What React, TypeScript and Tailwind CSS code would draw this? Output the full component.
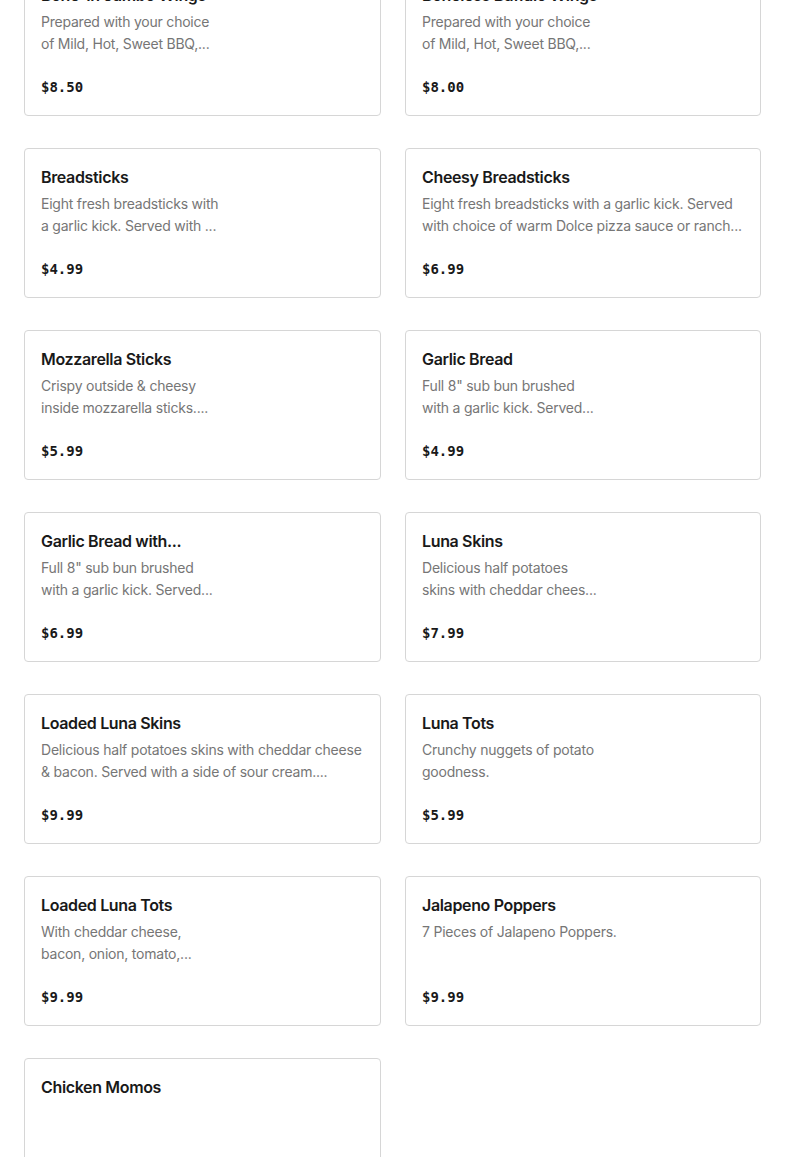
interface MenuItem {
  title: string;
  lines: string[];
  price?: string;
}

const ITEMS: MenuItem[] = [
  { title: 'Bone-In Jumbo Wings', lines: ['Prepared with your choice', 'of Mild, Hot, Sweet BBQ,...'], price: '$8.50' },
  { title: 'Boneless Buffalo Wings', lines: ['Prepared with your choice', 'of Mild, Hot, Sweet BBQ,...'], price: '$8.00' },
  { title: 'Breadsticks', lines: ['Eight fresh breadsticks with', 'a garlic kick. Served with ...'], price: '$4.99' },
  {
    title: 'Cheesy Breadsticks',
    lines: ['Eight fresh breadsticks with a garlic kick. Served', 'with choice of warm Dolce pizza sauce or ranch...'],
    price: '$6.99',
  },
  { title: 'Mozzarella Sticks', lines: ['Crispy outside & cheesy', 'inside mozzarella sticks....'], price: '$5.99' },
  { title: 'Garlic Bread', lines: ['Full 8" sub bun brushed', 'with a garlic kick. Served...'], price: '$4.99' },
  { title: 'Garlic Bread with...', lines: ['Full 8" sub bun brushed', 'with a garlic kick. Served...'], price: '$6.99' },
  { title: 'Luna Skins', lines: ['Delicious half potatoes', 'skins with cheddar chees...'], price: '$7.99' },
  {
    title: 'Loaded Luna Skins',
    lines: ['Delicious half potatoes skins with cheddar cheese', '& bacon. Served with a side of sour cream....'],
    price: '$9.99',
  },
  { title: 'Luna Tots', lines: ['Crunchy nuggets of potato', 'goodness.'], price: '$5.99' },
  { title: 'Loaded Luna Tots', lines: ['With cheddar cheese,', 'bacon, onion, tomato,...'], price: '$9.99' },
  { title: 'Jalapeno Poppers', lines: ['7 Pieces of Jalapeno Poppers.'], price: '$9.99' },
  { title: 'Chicken Momos', lines: [] },
];

const ItemCard = ({ item }: { item: MenuItem }) => (
  <div className="flex h-[150px] flex-col justify-between rounded-[4px] border border-[#d6d6d6] bg-white px-4 pt-[17px] pb-[17px]">
    <div>
      <h3 className="text-[16px] font-semibold leading-[22px] tracking-[-0.35px] text-[#191919]">{item.title}</h3>
      <div className="mt-[5px] text-[14px] leading-[22px] tracking-[-0.22px] text-[#767676]">
        {item.lines.map((line) => (
          <p key={line} className="whitespace-nowrap">
            {line}
          </p>
        ))}
      </div>
    </div>
    {item.price && (
      <p
        className="text-[14px] font-bold leading-[22px] text-[#191919]"
        style={{ fontFamily: '"DejaVu Sans Mono", "Liberation Mono", monospace' }}
      >
        {item.price}
      </p>
    )}
  </div>
);

export default function App() {
  return (
    <div className="h-[1157px] overflow-hidden bg-white" style={{ fontFamily: 'Inter, "Noto Sans", sans-serif' }}>
      <div className="-mt-[34px] grid grid-cols-[357px_356px] gap-x-6 gap-y-8 px-6">
        {ITEMS.map((item) => (
          <ItemCard key={item.title} item={item} />
        ))}
      </div>
    </div>
  );
}
